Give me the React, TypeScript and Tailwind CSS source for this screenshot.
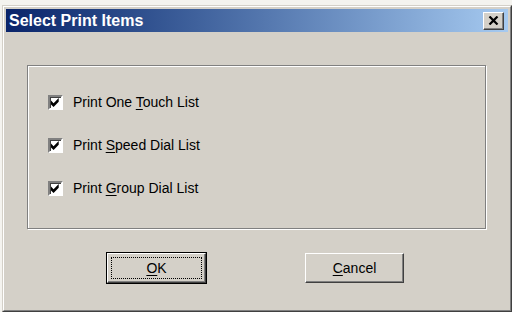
const font = { fontFamily: '"Liberation Sans", Arial, sans-serif' };

function CheckRow({ before, mnemonic, after }: { before: string; mnemonic: string; after: string }) {
  return (
    <div className="flex items-center h-[20px]">
      <div className="w-[15px] h-[15px] bg-white border-t-2 border-l-2 border-t-[#808080] border-l-[#808080] border-b-2 border-r-2 border-b-white border-r-white shadow-[inset_1px_1px_0_#404040] flex items-center justify-center">
        <svg width="9" height="9" viewBox="0 0 7 7">
          <path d="M0 2 L2 4 L6 0 L6 3 L2 7 L0 5 Z" fill="#000" />
        </svg>
      </div>
      <span className="ml-[10px] text-[14px] text-black leading-none">
        {before}
        <span className="underline underline-offset-2">{mnemonic}</span>
        {after}
      </span>
    </div>
  );
}

function Btn({ label, rest, isDefault }: { label: string; rest: string; isDefault?: boolean }) {
  return (
    <div className={isDefault ? 'border border-black' : ''}>
      <div className="w-[99px] h-[30px] bg-[#d4d0c8] border border-t-white border-l-white border-r-[#404040] border-b-[#404040] shadow-[inset_-1px_-1px_0_#808080] p-[3px]">
        <div className={`w-full h-full flex items-center justify-center text-[14px] text-black ${isDefault ? 'border border-dotted border-black' : ''}`}>
          <span>
            <span className="underline underline-offset-2">{label}</span>
            {rest}
          </span>
        </div>
      </div>
    </div>
  );
}

export default function App() {
  return (
    <div className="w-[512px] h-[312px] bg-[#f4f3ef] overflow-hidden pt-[5px] pl-[2px]" style={font}>
      <div className="w-[510px] h-[307px] bg-[#d4d0c8] border border-t-[#d4d0c8] border-l-[#d4d0c8] border-r-[#404040] border-b-[#404040]">
        <div className="w-full h-full border border-t-white border-l-white border-r-[#808080] border-b-[#808080] p-[2px] flex flex-col">
          {/* Title bar */}
          <div className="h-[23px] flex items-center justify-between bg-gradient-to-r from-[#0a246a] to-[#a6caf0] pl-[3px] pr-[4px]">
            <span className="text-white font-bold text-[16px] leading-none">Select Print Items</span>
            <div className="w-[21px] h-[18px] bg-[#d4d0c8] border border-t-white border-l-white border-r-[#404040] border-b-[#404040] shadow-[inset_-1px_-1px_0_#808080] flex items-center justify-center">
              <svg width="11" height="9" viewBox="0 0 11 9">
                <path d="M1.5 0.5 L9.5 8.5 M9.5 0.5 L1.5 8.5" stroke="#000" strokeWidth="2.2" />
              </svg>
            </div>
          </div>

          {/* Group box */}
          <div className="mt-[33px] ml-[21px] w-[459px] h-[164px] border border-[#808080] shadow-[1px_1px_0_#fff,inset_1px_1px_0_#fff] pl-[20px] pt-[26px] flex flex-col gap-[23px]">
            <CheckRow before="Print One " mnemonic="T" after="ouch List" />
            <CheckRow before="Print " mnemonic="S" after="peed Dial List" />
            <CheckRow before="Print " mnemonic="G" after="roup Dial List" />
          </div>

          {/* Buttons */}
          <div className="mt-[23px] ml-[100px] flex gap-[98px] items-start">
            <Btn label="O" rest="K" isDefault />
            <div className="mt-[1px]">
              <Btn label="C" rest="ancel" />
            </div>
          </div>
        </div>
      </div>
    </div>
  );
}
